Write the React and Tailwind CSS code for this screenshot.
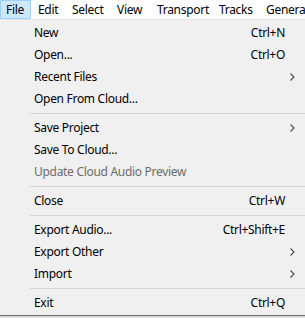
import React from "react";

const font = { fontFamily: '"Noto Sans", "Open Sans", sans-serif' };

function Chevron() {
  return (
    <svg width="5" height="8" viewBox="0 0 5 8" className="block">
      <polyline points="0.5,0.5 4,4 0.5,7.5" fill="none" stroke="#4a4a4a" strokeWidth="1.1" />
    </svg>
  );
}

function Item({ label, shortcut, sub, disabled }) {
  return (
    <div className="flex h-[22px] items-center pl-[34px]">
      <span className={"flex-1 whitespace-nowrap " + (disabled ? "text-[#6d6d6d]" : "text-black")}>{label}</span>
      {shortcut && <span className="whitespace-nowrap text-black">{shortcut}</span>}
      <span className="flex w-[20px] items-center pl-[5px]">{sub && <Chevron />}</span>
    </div>
  );
}

function Sep() {
  return (
    <div className="flex h-[7px] items-center pl-[30px]">
      <div className="h-px flex-1 bg-[#d7d7d7]" />
    </div>
  );
}

export default function App() {
  return (
    <div className="h-[318px] w-[305px] overflow-hidden bg-[#f0f0f0] text-[12px] leading-none tracking-[-0.3px]" style={font}>
      <div className="flex h-[19px] items-stretch overflow-hidden whitespace-nowrap bg-white">
        <div className="flex w-[31px] shrink-0 items-center border border-[#99d1ff] bg-[#cce8ff] pl-[5px]">File</div>
        <div className="flex w-[34px] shrink-0 items-center pl-[7px]">Edit</div>
        <div className="flex w-[45px] shrink-0 items-center pl-[7px]">Select</div>
        <div className="flex w-[40px] shrink-0 items-center pl-[7px]">View</div>
        <div className="flex w-[62px] shrink-0 items-center pl-[7px]">Transport</div>
        <div className="flex w-[47px] shrink-0 items-center pl-[7px]">Tracks</div>
        <div className="flex shrink-0 items-center pl-[7px]">Generate</div>
      </div>
      <div className="h-px bg-[#e3e3e3]" />
      <div className="h-[2px]" />
      <Item label="New" shortcut="Ctrl+N" />
      <Item label="Open..." shortcut="Ctrl+O" />
      <Item label="Recent Files" sub />
      <Item label="Open From Cloud..." />
      <Sep />
      <Item label="Save Project" sub />
      <Item label="Save To Cloud..." />
      <Item label="Update Cloud Audio Preview" disabled />
      <Sep />
      <Item label="Close" shortcut="Ctrl+W" />
      <Sep />
      <Item label="Export Audio..." shortcut="Ctrl+Shift+E" />
      <Item label="Export Other" sub />
      <Item label="Import" sub />
      <Sep />
      <Item label="Exit" shortcut="Ctrl+Q" />
      <div className="h-[1px]" />
      <div className="h-px bg-[#6e6e6e]" />
      <div className="h-[4px] bg-[#d9d9d9]" />
    </div>
  );
}
